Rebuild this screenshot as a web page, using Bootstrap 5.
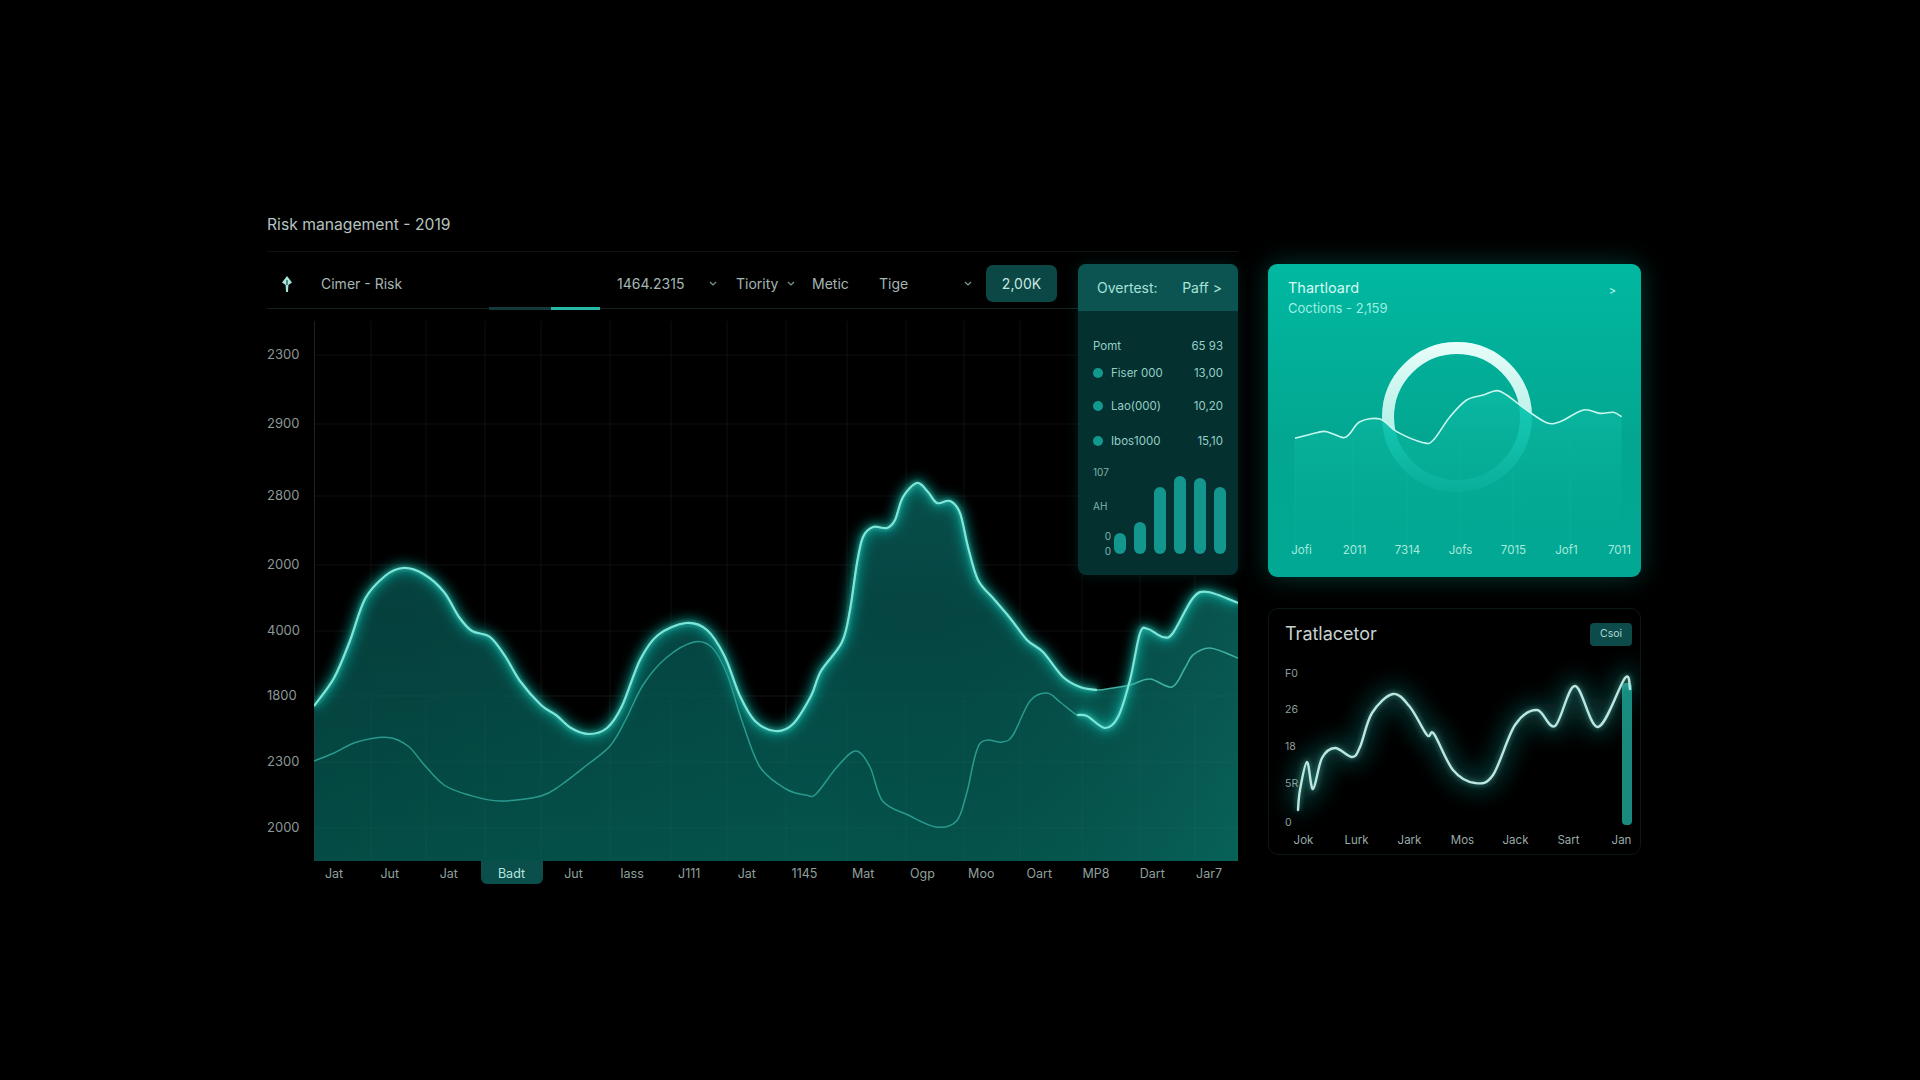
<!DOCTYPE html>
<html lang="en">
<head>
<meta charset="utf-8">
<title>Risk management</title>
<link href="https://cdn.jsdelivr.net/npm/bootstrap@5.3.0/dist/css/bootstrap.min.css" rel="stylesheet">
<style>
html,body{background:#000;height:100%}
body{font-family:Inter,"Liberation Sans",sans-serif;color:#b9c7c5;overflow:hidden}
.dash-page{padding:214px 0 0 267px}
.left-col{width:971px;position:relative;flex:none}
.right-col{width:373px;margin:50px 0 0 30px;flex:none}
.page-title{font-size:15.7px;line-height:22px;color:#b5c3c1;padding-bottom:15px;border-bottom:1px solid #0d1514;font-weight:400}
.tool-bar{display:grid;grid-template-columns:54px 296px 92px 27px 51px 25px 67px 85px 22px 71px;align-items:center;width:812px;height:57px;padding-top:7px;border-bottom:1px solid #152120;font-size:14px;color:#a5b6b4;position:relative}
.tool-bar svg{display:block}
.tool-ico{padding-left:12px}
.val-btn{background:#0b4744;color:#c7e6e1;height:37px;border-radius:7px;font-size:14px}
.tab-dim,.tab-on{position:absolute;bottom:-2px;height:3px}
.tab-dim{left:222px;width:62px;background:#133a38}
.tab-on{left:284px;width:49px;background:#27b9a7}
.plot-row{margin-top:12px}
.y-axis{width:47px;flex:none;display:grid;grid-template-rows:68px 70px 74px 64px 68px 62px 70px 62px;align-items:center;font-size:13px;color:#8b9896;padding-top:0}
.plot-svg{display:block;width:924px;height:540px;flex:none}
.x-axis{display:grid;grid-template-columns:55px 56.5px 61.5px 64px 60px 57px 57.5px 57.5px 58px 59.5px 59px 58.5px 57.5px 56px 56.5px 57px;margin-left:39.5px;height:24px;font-size:12.5px;color:#8fa09e;line-height:26px;text-align:center}
.x-cell{display:flex;justify-content:center}
.x-pill{flex:none;width:62px;background:#0b4f4c;color:#b5e6df;border-radius:0 0 6px 6px;height:23px}
.side-panel{position:absolute;right:0;top:50px;width:160px;height:311px;background:#04302f;border-radius:8px;overflow:hidden;box-shadow:0 0 14px rgba(0,150,135,.18);color:#93cfc7;font-size:11.5px}
.side-head{height:47px;background:#0b5451;padding:0 16px 0 19px;font-size:14px;color:#a8e2d9}
.side-body{padding:27px 15px 0}
.side-row{height:16px;line-height:16px}
.side-row.r2{margin-top:11px}
.side-row.r3{margin-top:17px}
.side-row.r4{margin-top:19px}
.leg-dot{display:inline-block;width:10px;height:10px;border-radius:50%;background:#12998e;margin:0 8px 0 0;vertical-align:-1px}
.bar-zone{height:92px;margin-top:13px}
.bar-lab{width:18px;flex:none;font-size:10px;color:#7fb4ad;height:100%;display:grid;grid-template-rows:20px 48px 12px 18px;align-items:center}
.bar-lab span{line-height:12px}
.bar-fill{width:12px;background:#12968e;border-radius:6px}
.bar-set{gap:8px;margin-left:3px}
.hero-card{position:relative;height:313px;border-radius:9px;background:linear-gradient(180deg,#01b8a1 0%,#03a791 55%,#01a893 100%);box-shadow:0 0 26px rgba(0,190,165,.3);overflow:hidden;color:#b9f7ec}
.hero-svg,.trace-svg{position:absolute;left:0;top:0;width:100%;height:100%}
.hero-text{position:relative;padding:13px 21px 0 20px;height:278px}
.hero-title{font-size:14.5px;line-height:21px;color:#d4fbf3}
.hero-sub{font-size:13px;line-height:21px;color:#9df0e1}
.hero-go{color:#cdf8f0;font-size:11px;margin:6px 4px 0 0}
.hero-x{position:relative;display:grid;grid-template-columns:repeat(7,53px);margin-left:7px;font-size:11.5px;color:#a7eadf;text-align:center}
.trace-card{position:relative;margin-top:31px;height:247px;border:1px solid #0c1716;border-radius:10px;overflow:hidden}
.trace-head{position:relative;padding:13px 8px 0 16px}
.trace-title{font-size:18px;line-height:24px;color:#c6d2d0}
.trace-badge{width:42px;height:23px;background:#0d4a4a;border-radius:4px;color:#a9d8d3;font-size:10.5px}
.trace-y{position:relative;margin:9px 0 0 16px;display:grid;grid-template-rows:37px 36px 37px 38px 40px;font-size:10.5px;color:#8e9f9d;align-items:center;height:188px;width:30px}
.trace-x{position:absolute;left:8px;bottom:5px;display:grid;grid-template-columns:repeat(7,53px);font-size:11.5px;color:#9aaaa8;text-align:center}
</style>
</head>
<body>
<main class="dash-page d-flex">
  <section class="left-col">
    <h1 class="page-title m-0">Risk management - 2019</h1>
    <div class="tool-bar">
      <div class="tool-ico"><svg width="16" height="18" viewBox="0 0 16 18"><path d="M8 1 L13 7.5 L9.4 10 L9 17 H7 L6.6 10 L3 7.5 Z" fill="#a6e4dc"/><path d="M8 5 V10" stroke="#1a4a46" stroke-width="1.2"/></svg></div>
      <div>Cimer - Risk</div>
      <div>1464.2315</div>
      <div><svg width="8" height="5" viewBox="0 0 8 5"><path d="M1 1 L4 4 L7 1" fill="none" stroke="#7f9794" stroke-width="1.2"/></svg></div>
      <div>Tiority</div>
      <div><svg width="8" height="5" viewBox="0 0 8 5"><path d="M1 1 L4 4 L7 1" fill="none" stroke="#7f9794" stroke-width="1.2"/></svg></div>
      <div>Metic</div>
      <div>Tige</div>
      <div><svg width="8" height="5" viewBox="0 0 8 5"><path d="M1 1 L4 4 L7 1" fill="none" stroke="#7f9794" stroke-width="1.2"/></svg></div>
      <div class="val-btn d-flex align-items-center justify-content-center">2,00K</div>
      <span class="tab-dim"></span><span class="tab-on"></span>
    </div>
    <div class="plot-row d-flex">
      <div class="y-axis"><span>2300</span><span>2900</span><span>2800</span><span>2000</span><span>4000</span><span>1800</span><span>2300</span><span>2000</span></div>
      <svg class="plot-svg" viewBox="314 321 924 540" aria-hidden="true">
        <defs>
          <filter id="blurA" x="-10%" y="-30%" width="120%" height="160%"><feGaussianBlur stdDeviation="6"/></filter>
          <filter id="blurB" x="-10%" y="-30%" width="120%" height="160%"><feGaussianBlur stdDeviation="2"/></filter>
          <linearGradient id="fillV" gradientUnits="userSpaceOnUse" x1="0" y1="480" x2="0" y2="861"><stop offset="0" stop-color="#084f4b"/><stop offset=".35" stop-color="#054643"/><stop offset="1" stop-color="#04544c"/></linearGradient>
          <linearGradient id="fillH" gradientUnits="userSpaceOnUse" x1="314" y1="0" x2="1238" y2="0"><stop offset="0" stop-color="#000" stop-opacity=".1"/><stop offset=".55" stop-color="#000" stop-opacity="0"/><stop offset="1" stop-color="#1fb5a0" stop-opacity=".14"/></linearGradient>
        </defs>
        <g stroke="#fff" stroke-opacity=".055" stroke-width="1">
          <path d="M314 355H1238M314 424H1238M314 496H1238M314 565H1238M314 631H1238M314 696H1238M314 762H1238M314 828H1238"/>
          <path d="M371 321V861M426 321V861M485 321V861M541 321V861M610 321V861M671 321V861M727 321V861M786 321V861M847 321V861M906 321V861M964 321V861M1020 321V861M1082 321V861M1140 321V861M1195 321V861"/>
        </g>
        <path id="areaFillV" fill="url(#fillV)"/>
        <path id="areaFillH" fill="url(#fillH)"/>
        <g stroke="#fff" stroke-opacity=".03" stroke-width="1">
          <path d="M314 696H1238M314 762H1238M314 828H1238M371 700V861M426 700V861M485 700V861M541 700V861M610 700V861M671 700V861M727 700V861M786 700V861M847 700V861M906 700V861M964 700V861M1020 700V861M1082 700V861M1140 700V861M1195 700V861"/>
        </g>
        <path d="M314 321V861" stroke="#2e3b3a" stroke-width="1.2"/>
        <path id="mainGlow" fill="none" stroke="#12c9b8" stroke-width="9" stroke-opacity=".55" filter="url(#blurA)"/>
        <path id="secGlowB" fill="none" stroke="#12c9b8" stroke-width="9" stroke-opacity=".55" filter="url(#blurA)"/>
        <path id="mainGlow2" fill="none" stroke="#2fd9c8" stroke-width="4" stroke-opacity=".5" filter="url(#blurB)"/>
        <path id="secGlow2" fill="none" stroke="#2fd9c8" stroke-width="4" stroke-opacity=".5" filter="url(#blurB)"/>
        <path id="secThin" fill="none" stroke="#2a9a8f" stroke-width="1.5"/>
        <path id="mainThin" fill="none" stroke="#3fb0a4" stroke-width="1.6"/>
        <path id="mainLine" fill="none" stroke="#7be6d9" stroke-width="2.2"/>
        <path id="secLine" fill="none" stroke="#7be6d9" stroke-width="2.2"/>
      </svg>
    </div>
    <div class="x-axis">
      <div>Jat</div><div>Jut</div><div>Jat</div><div class="x-cell"><div class="x-pill">Badt</div></div><div>Jut</div><div>Iass</div><div>J111</div><div>Jat</div><div>1145</div><div>Mat</div><div>Ogp</div><div>Moo</div><div>Oart</div><div>MP8</div><div>Dart</div><div>Jar7</div>
    </div>
    <aside class="side-panel">
      <div class="side-head d-flex align-items-center justify-content-between"><span>Overtest:</span><span>Paff &gt;</span></div>
      <div class="side-body">
        <div class="side-row d-flex justify-content-between"><span>Pomt</span><span>65 93</span></div>
        <div class="side-row r2 d-flex justify-content-between"><span><i class="leg-dot"></i>Fiser 000</span><span>13,00</span></div>
        <div class="side-row r3 d-flex justify-content-between"><span><i class="leg-dot"></i>Lao(000)</span><span>10,20</span></div>
        <div class="side-row r4 d-flex justify-content-between"><span><i class="leg-dot"></i>Ibos1000</span><span>15,10</span></div>
        <div class="bar-zone d-flex">
          <div class="bar-lab"><span>107</span><span>AH</span><span class="text-end">0</span><span class="text-end">0</span></div>
          <div class="bar-set d-flex align-items-end">
            <div class="bar-fill" style="height:21px"></div>
            <div class="bar-fill" style="height:32px"></div>
            <div class="bar-fill" style="height:67px"></div>
            <div class="bar-fill" style="height:78px"></div>
            <div class="bar-fill" style="height:76px"></div>
            <div class="bar-fill" style="height:67px"></div>
          </div>
        </div>
      </div>
    </aside>
  </section>
  <section class="right-col">
    <div class="hero-card">
      <svg class="hero-svg" viewBox="1268 264 373 313" aria-hidden="true">
        <defs>
          <linearGradient id="ringLow" gradientUnits="userSpaceOnUse" x1="0" y1="400" x2="0" y2="490"><stop offset="0" stop-color="#19d3bd"/><stop offset="1" stop-color="#0aad99"/></linearGradient>
          <linearGradient id="ringTop" gradientUnits="userSpaceOnUse" x1="0" y1="342" x2="0" y2="430"><stop offset="0" stop-color="#e9fdfa"/><stop offset="1" stop-color="#b4efe6"/></linearGradient>
          <linearGradient id="heroFill" gradientUnits="userSpaceOnUse" x1="0" y1="390" x2="0" y2="560"><stop offset="0" stop-color="#12c4ae" stop-opacity=".55"/><stop offset="1" stop-color="#05a892" stop-opacity="0"/></linearGradient>
          <clipPath id="aboveLine"><path id="aboveClip"/></clipPath>
        </defs>
        <path d="M1295 440V555M1353 440V555M1407 440V555M1460 440V555M1513 440V555M1570 440V555" stroke="#fff" stroke-opacity=".05"/>
        <circle cx="1457" cy="417" r="69" fill="none" stroke="url(#ringLow)" stroke-width="12"/>
        <path id="heroArea" fill="url(#heroFill)"/>
        <circle cx="1457" cy="417" r="69" fill="none" stroke="url(#ringTop)" stroke-width="12" clip-path="url(#aboveLine)"/>
        <path id="heroLine" fill="none" stroke="#c9f7ef" stroke-width="1.6"/>
      </svg>
      <div class="hero-text">
        <div class="d-flex justify-content-between align-items-start">
          <div><div class="hero-title">Thartloard</div><div class="hero-sub">Coctions - 2,159</div></div>
          <span class="hero-go">&gt;</span>
        </div>
      </div>
      <div class="hero-x"><span>Jofi</span><span>2011</span><span>7314</span><span>Jofs</span><span>7015</span><span>Jof1</span><span>7011</span></div>
    </div>
    <div class="trace-card">
      <svg class="trace-svg" viewBox="1269 609 371 245" aria-hidden="true">
        <defs>
          <filter id="traceHalo" x="-10%" y="-40%" width="120%" height="180%"><feGaussianBlur stdDeviation="11"/></filter>
          <filter id="traceTight" x="-10%" y="-30%" width="120%" height="160%"><feGaussianBlur stdDeviation="2.5"/></filter>
        </defs>
        <rect x="1622" y="683" width="10" height="142" rx="4" fill="#1b8a7e"/>
        <path id="traceHaloP" fill="none" stroke="#159c92" stroke-width="16" stroke-opacity=".38" filter="url(#traceHalo)"/>
        <path id="traceGlowP" fill="none" stroke="#49d6c8" stroke-width="4" stroke-opacity=".4" filter="url(#traceTight)"/>
        <path id="traceLine" fill="none" stroke="#bfe5e0" stroke-width="2.4" stroke-linecap="round" stroke-linejoin="round"/>
      </svg>
      <div class="trace-head d-flex justify-content-between align-items-center"><span class="trace-title">Tratlacetor</span><span class="trace-badge d-flex align-items-center justify-content-center">Csoi</span></div>
      <div class="trace-y"><span>F0</span><span>26</span><span>18</span><span>5R</span><span>0</span></div>
      <div class="trace-x"><span>Jok</span><span>Lurk</span><span>Jark</span><span>Mos</span><span>Jack</span><span>Sart</span><span>Jan</span></div>
    </div>
  </section>
</main>
<script src="https://cdn.jsdelivr.net/npm/bootstrap@5.3.0/dist/js/bootstrap.bundle.min.js"></script>
<script>
const mainPts=[[314,706],[334,678],[349.5,642],[365,599],[385,576],[403,568],[423.5,574],[444,592],[459,617],[472,631],[490,637],[505,656],[520,681],[541,705],[556,715],[571,728],[589,734],[607,728],[622,706],[640,660],[658,635],[686,623],[707,630],[724.5,656],[740,696],[755,721],[775.5,731],[793,724],[811,696],[821,671],[842,642],[850,610],[857,563],[863,537],[873,527],[887,528],[895,520],[903,497],[917,483],[928,492],[937,503],[950,501],[960,513],[968,547],[978,580],[993,598],[1010,618],[1027,640],[1043,652],[1063,677],[1080,687],[1097,690],[1113,688],[1130,685],[1150,679],[1172,687],[1185,668],[1193,655],[1210,648],[1238,658]];
const secPts=[[314,761],[334,753],[357,742],[388,737.5],[408,746],[423.5,764],[444,785],[469,795],[500,801],[541,796],[561,785],[587,765],[610,746],[625,721],[643,685],[666,658],[694,642],[712,647.5],[727,674],[742,721],[760,767],[786,789],[806,795],[816,794],[837,767],[855.6,751],[870,767],[882.6,801],[908,815],[936,827],[956.6,821],[967,792],[979.6,744],[1002.6,742],[1013,735],[1030,701],[1047,693],[1060,702],[1077,715],[1087,716],[1105,728],[1118,717],[1130,680],[1140,633],[1148,629],[1163,637],[1173,633],[1193,598],[1208,592],[1238,603]];
const heroPts=[[135,565],[200,548],[230,545],[280,563],[300,550],[330,515],[390,507],[440,545],[520,578],[550,570],[600,500],[650,450],[700,435],[740,422],[770,435],[830,480],[890,518],[930,515],[1000,480],[1050,490],[1090,487],[1115,500]].map(p=>[1250+p[0]/3,250+p[1]/3]);
const tracePts=[[1298,810],[1300,790],[1307,762],[1313,789],[1322,758],[1335,748],[1352,757],[1360,747],[1372,713],[1393,694],[1410,707],[1427,735],[1434,734],[1453,770],[1475,783],[1493,775],[1515,725],[1537,710],[1555,726],[1575,686],[1598,727],[1625,678],[1630,689]];
function smooth(p){
  let d='M'+p[0][0]+' '+p[0][1];
  for(let i=0;i<p.length-1;i++){
    const a=p[Math.max(i-1,0)],b=p[i],c=p[i+1],e=p[Math.min(i+2,p.length-1)];
    d+=' C'+(b[0]+(c[0]-a[0])/6).toFixed(1)+' '+(b[1]+(c[1]-a[1])/6).toFixed(1)+' '+(c[0]-(e[0]-b[0])/6).toFixed(1)+' '+(c[1]-(e[1]-b[1])/6).toFixed(1)+' '+c[0]+' '+c[1];
  }
  return d;
}
const setD=(id,d)=>document.getElementById(id).setAttribute('d',d);
const idxA=mainPts.findIndex(p=>p[0]===1097), idxB=secPts.findIndex(p=>p[0]===1077);
const brightMain=smooth(mainPts.slice(0,idxA+1)), brightSec=smooth(secPts.slice(idxB));
const envelope=mainPts.slice(0,idxA+2).concat(secPts.slice(secPts.findIndex(p=>p[0]===1130)));
const areaD=smooth(envelope)+' L1238 861 L314 861 Z';
setD('areaFillV',areaD);setD('areaFillH',areaD);
setD('mainGlow',brightMain);setD('mainGlow2',brightMain);setD('mainLine',brightMain);
setD('secGlowB',brightSec);setD('secGlow2',brightSec);setD('secLine',brightSec);
setD('secThin',smooth(secPts));setD('mainThin',smooth(mainPts));
const heroD=smooth(heroPts);
setD('heroLine',heroD);
setD('heroArea',heroD+' L1621 565 L1295 565 Z');
setD('aboveClip',heroD+' L1641 264 L1268 264 Z');
const traceD=smooth(tracePts);
setD('traceHaloP',traceD);setD('traceGlowP',traceD);setD('traceLine',traceD);
</script>
</body>
</html>
